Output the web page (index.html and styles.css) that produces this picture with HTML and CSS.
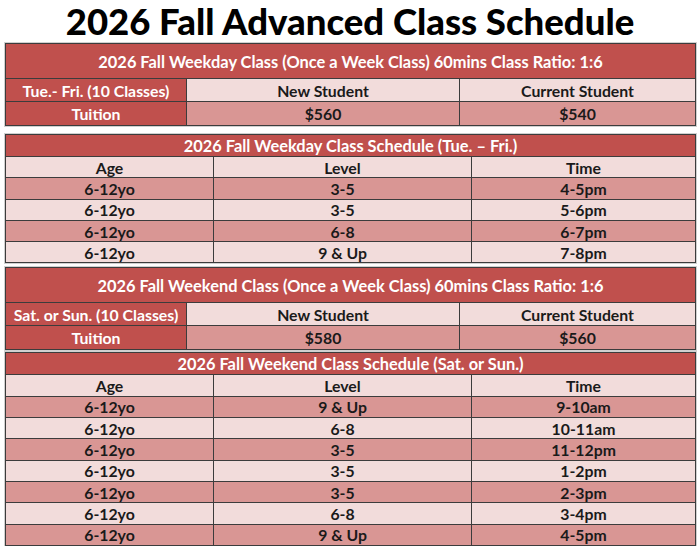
FILE: index.html
```html
<!DOCTYPE html>
<html>
<head>
<meta charset="utf-8">
<link rel="stylesheet" href="styles.css">
</head>
<body>
<div class="page">
  <h1 class="title">2026 Fall Advanced Class Schedule</h1>

  <table class="tbl price gap-a">
    <colgroup><col class="c1"><col class="c2"><col class="c3"></colgroup>
    <tr class="r-head"><td colspan="3" class="head">2026 Fall Weekday Class (Once a Week Class) 60mins Class Ratio: 1:6</td></tr>
    <tr class="r-a"><td class="label">Tue.- Fri. (10 Classes)</td><td class="light">New Student</td><td class="light">Current Student</td></tr>
    <tr class="r-b"><td class="label">Tuition</td><td class="mid">$560</td><td class="mid">$540</td></tr>
  </table>

  <table class="tbl sched gap-b">
    <colgroup><col class="s1"><col class="s2"><col class="s3"></colgroup>
    <tr class="r-sh"><td colspan="3" class="head">2026 Fall Weekday Class Schedule (Tue. – Fri.)</td></tr>
    <tr class="r-row light"><td>Age</td><td>Level</td><td>Time</td></tr>
    <tr class="r-row mid"><td>6-12yo</td><td>3-5</td><td>4-5pm</td></tr>
    <tr class="r-row light"><td>6-12yo</td><td>3-5</td><td>5-6pm</td></tr>
    <tr class="r-row mid"><td>6-12yo</td><td>6-8</td><td>6-7pm</td></tr>
    <tr class="r-row light"><td>6-12yo</td><td>9 &amp; Up</td><td>7-8pm</td></tr>
  </table>

  <table class="tbl price gap-c">
    <colgroup><col class="c1"><col class="c2"><col class="c3"></colgroup>
    <tr class="r-head"><td colspan="3" class="head">2026 Fall Weekend Class (Once a Week Class) 60mins Class Ratio: 1:6</td></tr>
    <tr class="r-a"><td class="label">Sat. or Sun. (10 Classes)</td><td class="light">New Student</td><td class="light">Current Student</td></tr>
    <tr class="r-b"><td class="label">Tuition</td><td class="mid">$580</td><td class="mid">$560</td></tr>
  </table>

  <table class="tbl sched">
    <colgroup><col class="s1"><col class="s2"><col class="s3"></colgroup>
    <tr class="r-sh"><td colspan="3" class="head">2026 Fall Weekend Class Schedule (Sat. or Sun.)</td></tr>
    <tr class="r-row light"><td>Age</td><td>Level</td><td>Time</td></tr>
    <tr class="r-row mid"><td>6-12yo</td><td>9 &amp; Up</td><td>9-10am</td></tr>
    <tr class="r-row light"><td>6-12yo</td><td>6-8</td><td>10-11am</td></tr>
    <tr class="r-row mid"><td>6-12yo</td><td>3-5</td><td>11-12pm</td></tr>
    <tr class="r-row light"><td>6-12yo</td><td>3-5</td><td>1-2pm</td></tr>
    <tr class="r-row mid"><td>6-12yo</td><td>3-5</td><td>2-3pm</td></tr>
    <tr class="r-row light"><td>6-12yo</td><td>6-8</td><td>3-4pm</td></tr>
    <tr class="r-row mid"><td>6-12yo</td><td>9 &amp; Up</td><td>4-5pm</td></tr>
  </table>
</div>
</body>
</html>
```

FILE: styles.css
```css
html, body {
  margin: 0;
  padding: 0;
  background: #ffffff;
}
.page {
  width: 699px;
  padding: 0 4px 0 5px;
  box-sizing: border-box;
  display: flex;
  flex-direction: column;
  font-family: Lato, "Open Sans", sans-serif;
  font-weight: 700;
  color: #1a1a1a;
}
.title {
  margin: 0;
  height: 43px;
  line-height: 42px;
  font-size: 36.5px;
  font-weight: 900;
  text-align: center;
  color: #000;
}
.tbl {
  width: 690px;
  border-collapse: collapse;
  table-layout: fixed;
  box-shadow: 0 0 0 1px #d0d0d0;
}
.tbl td {
  border: 1px solid #3c3c3c;
  padding: 0;
  text-align: center;
  font-size: 15.8px;
  white-space: nowrap;
  overflow: hidden;
}
.tbl td.head {
  font-size: 16.4px;
}
.gap-a { margin-bottom: 8px; }
.gap-b { margin-bottom: 4px; }
.gap-c { margin-bottom: 2px; }
.c1 { width: 181px; }
.c2 { width: 273px; }
.c3 { width: 236px; }
.s1 { width: 208px; }
.s2 { width: 258px; }
.s3 { width: 224px; }
.head {
  background: #c0504d;
  color: #ffffff;
}
.label {
  background: #c0504d;
  color: #ffffff;
}
.light, .light td { background: #f2dcdb; }
.mid, .mid td { background: #d99694; }
.r-head td { height: 34px; }
.r-a td { height: 22px; }
.r-b td { height: 23px; }
.r-sh td { height: 21px; }
.r-row td { height: 20.3px; }
```
